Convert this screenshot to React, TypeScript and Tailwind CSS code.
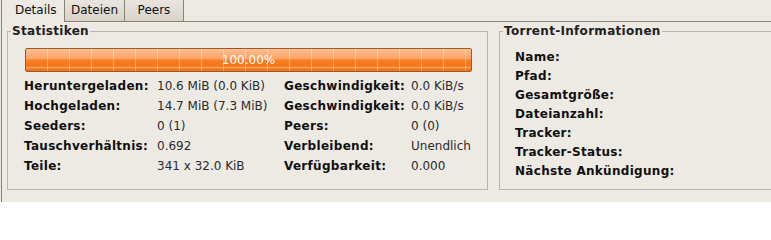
import React from 'react'

const stats: [string, string, string, string][] = [
  ['Heruntergeladen:', '10.6 MiB (0.0 KiB)', 'Geschwindigkeit:', '0.0 KiB/s'],
  ['Hochgeladen:', '14.7 MiB (7.3 MiB)', 'Geschwindigkeit:', '0.0 KiB/s'],
  ['Seeders:', '0 (1)', 'Peers:', '0 (0)'],
  ['Tauschverhältnis:', '0.692', 'Verbleibend:', 'Unendlich'],
  ['Teile:', '341 x 32.0 KiB', 'Verfügbarkeit:', '0.000'],
]

const infos = [
  'Name:',
  'Pfad:',
  'Gesamtgröße:',
  'Dateianzahl:',
  'Tracker:',
  'Tracker-Status:',
  'Nächste Ankündigung:',
]

function Tabs() {
  return (
    <div className="flex h-[22px] shrink-0">
      <div className="w-[63px] border-r border-[#8a8275] pl-[13px] pt-[3px] text-[#101010]">Details</div>
      <div className="w-[60px] border-r border-b border-[#8a8275] bg-[linear-gradient(to_bottom,#e9e5de,#d8d3ca)] text-center pt-[3px] text-[#101010]">
        Dateien
      </div>
      <div className="w-[59px] border-r border-b border-[#8a8275] bg-[linear-gradient(to_bottom,#e9e5de,#d8d3ca)] text-center pt-[3px] text-[#101010]">
        Peers
      </div>
      <div className="flex-1 border-b border-[#8a8275]"></div>
    </div>
  )
}

function ProgressBar() {
  return (
    <div className="ml-[17px] w-[447px] h-[24px] border border-[#9a5a2a] rounded-[2px] bg-[linear-gradient(to_bottom,#fcc08f_0%,#fba066_45%,#f77f24_50%,#f67418_78%,#f9a060_84%,#f67a1e_90%,#e86e16_100%)]">
      <div className="h-full w-full flex items-center justify-center text-white bg-[repeating-linear-gradient(to_right,transparent_0px,transparent_21px,rgba(255,255,255,0.35)_21px,rgba(255,255,255,0.35)_22px)]">
        100.00%
      </div>
    </div>
  )
}

export default function App() {
  return (
    <div className="w-[771px] h-[202px] overflow-hidden bg-[#edeae4] font-['DejaVu_Sans',sans-serif] text-[12px] leading-[14px] text-[#1a1a1a]">
      <div className="ml-[1px] h-full border-l border-[#8a8275] flex flex-col">
        <Tabs />
        <div className="flex pl-[5px] pt-[2px]">
          <fieldset className="w-[481px] h-[166px] shrink-0 border border-[#bab5ac]">
            <legend className="ml-[3px] px-[1px] font-bold tracking-[0.3px] text-[#202020]">Statistiken</legend>
            <div className="mt-[10px]">
              <ProgressBar />
            </div>
            <div className="ml-[16px] mt-[4px] grid grid-cols-[133px_127px_127px_1fr]">
              {stats.map((r, i) => (
                <React.Fragment key={i}>
                  <div className="h-[20px] flex items-center font-bold tracking-[0.3px] text-[#101010]">{r[0]}</div>
                  <div className="h-[20px] flex items-center text-[#2a2a2a]">{r[1]}</div>
                  <div className="h-[20px] flex items-center font-bold tracking-[0.3px] text-[#101010]">{r[2]}</div>
                  <div className="h-[20px] flex items-center text-[#2a2a2a]">{r[3]}</div>
                </React.Fragment>
              ))}
            </div>
          </fieldset>
          <fieldset className="ml-[11px] w-[290px] h-[166px] shrink-0 border border-[#bab5ac]">
            <legend className="ml-[3px] px-[1px] font-bold tracking-[0.3px] text-[#202020]">Torrent-Informationen</legend>
            <div className="mt-[9px] pl-[15px] flex flex-col">
              {infos.map((l) => (
                <div key={l} className="h-[19px] flex items-center font-bold tracking-[0.3px] text-[#101010]">
                  {l}
                </div>
              ))}
            </div>
          </fieldset>
        </div>
      </div>
    </div>
  )
}
